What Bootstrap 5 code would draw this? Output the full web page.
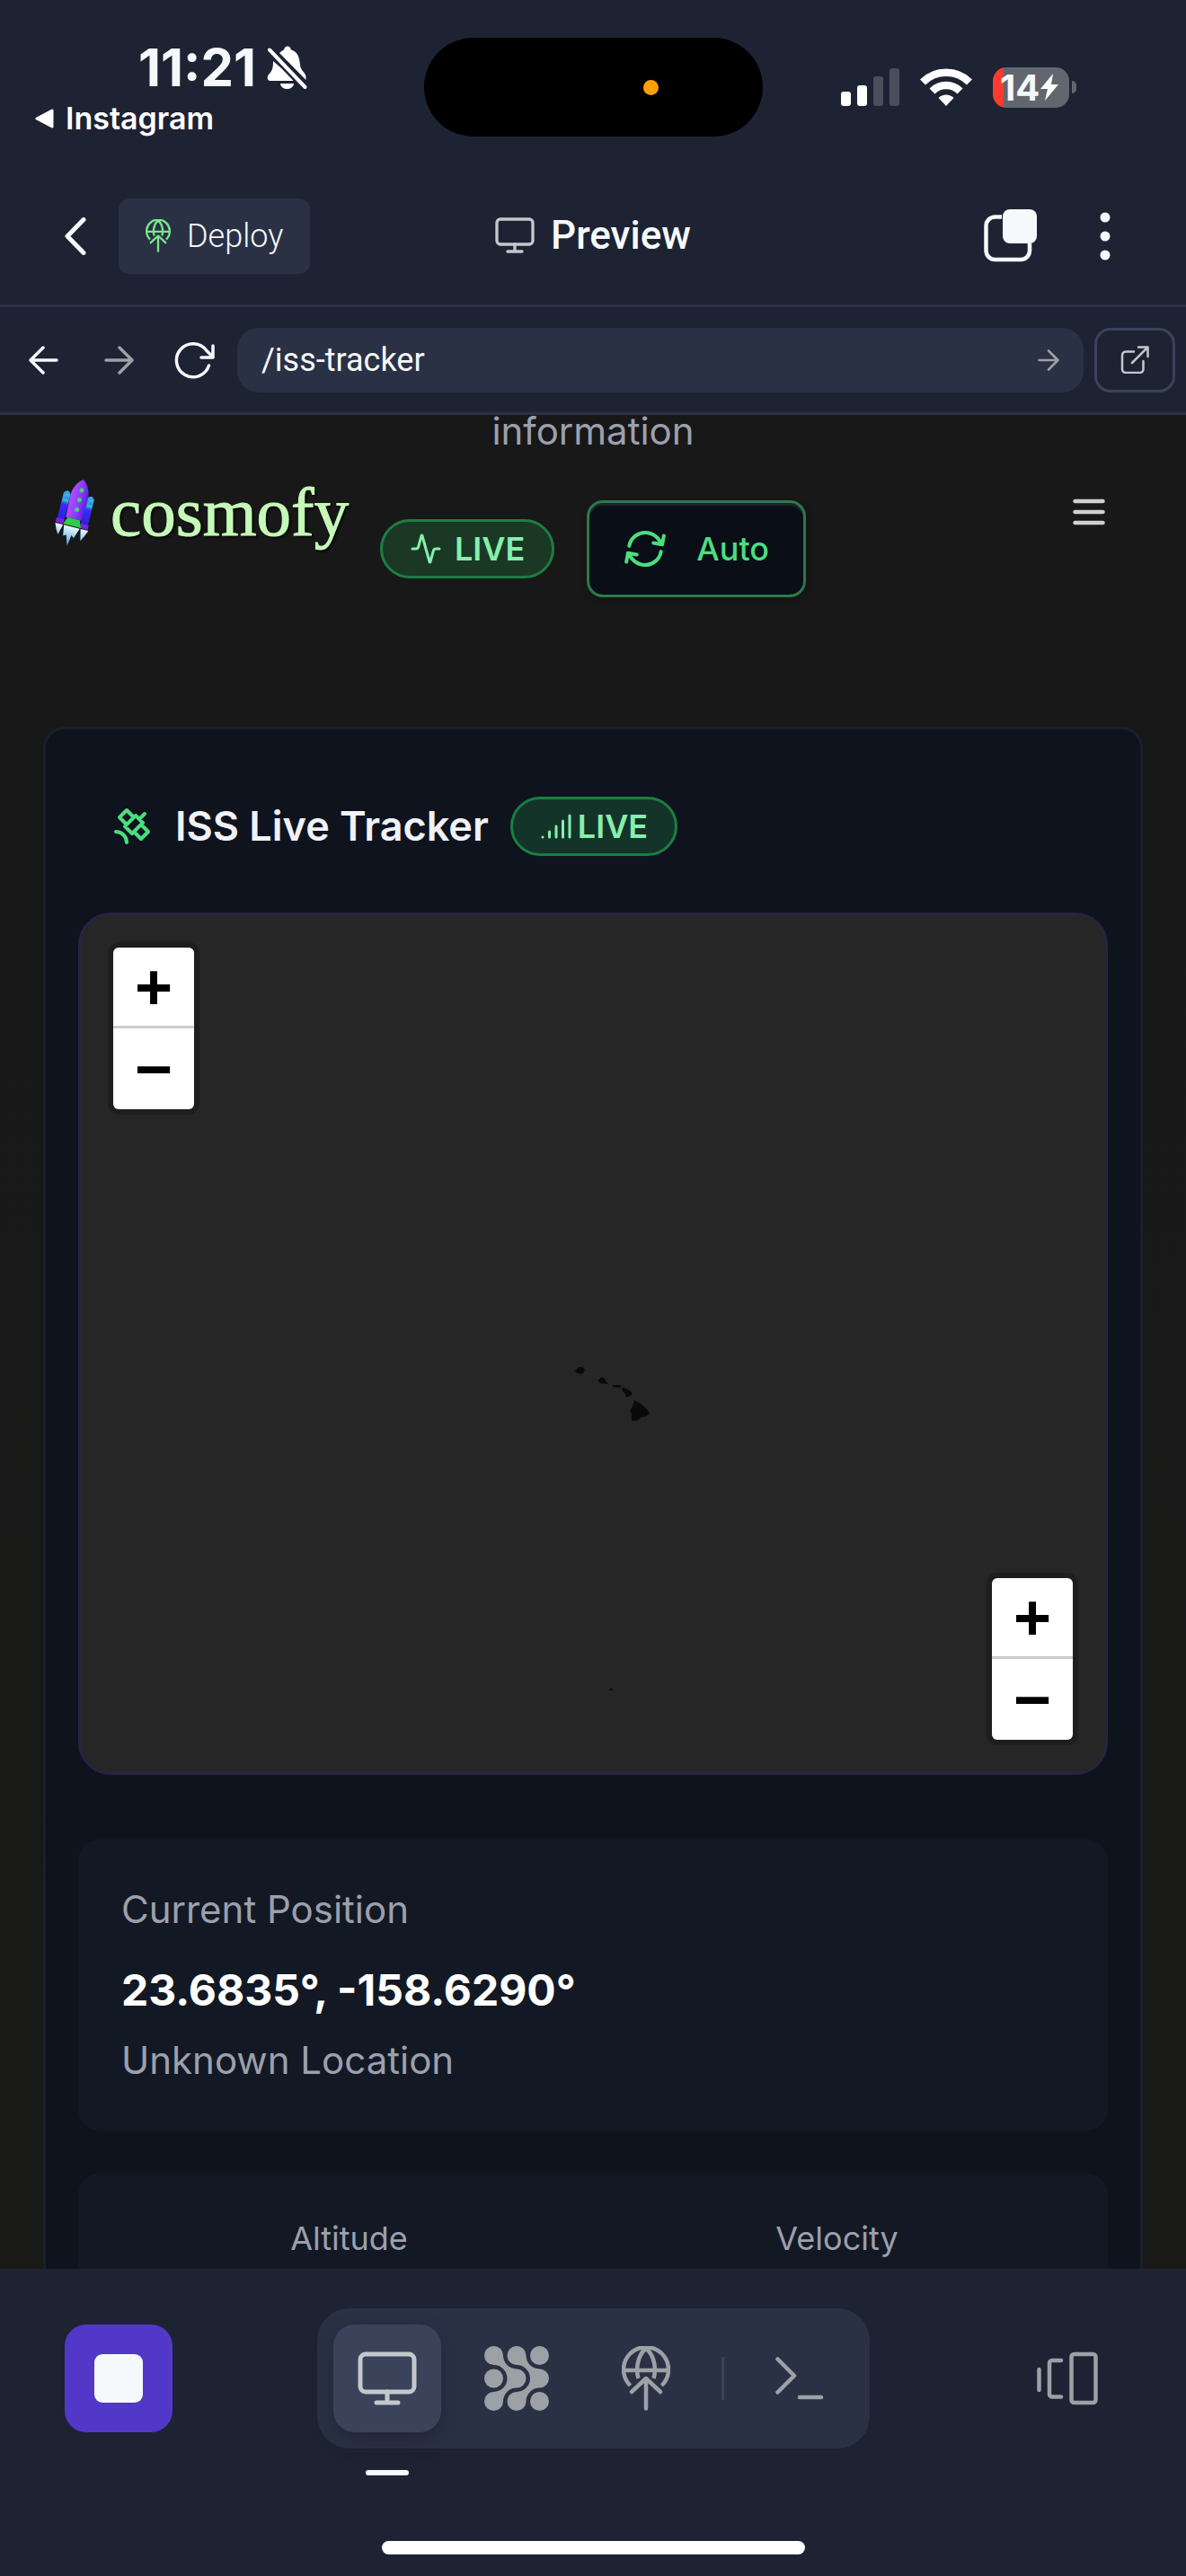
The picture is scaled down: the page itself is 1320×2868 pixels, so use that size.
<!DOCTYPE html>
<html lang="en">
<head>
<meta charset="utf-8">
<meta name="viewport" content="width=device-width, initial-scale=1">
<title>Preview – ISS Live Tracker</title>
<link href="https://cdn.jsdelivr.net/npm/bootstrap@5.3.0/dist/css/bootstrap.min.css" rel="stylesheet">
<style>
  :root { --shell: #1d2332; --raised: #2b3145; --edge: #3b435b; --ink: #f5f9fc; --dim: #9ca1a6; --muted: #9ca0ae; }
  body { background: var(--shell); color: var(--ink); font-family: Inter, "Liberation Sans", sans-serif; }
  svg { display: block; flex: none; }
  .plain { border: 0; background: none; padding: 0; color: inherit; display: flex; align-items: center; justify-content: center; flex: none; text-decoration: none; }
  .shell { height: 100vh; }
  .three { display: grid; grid-template-columns: 1fr auto 1fr; }
  .three > * { min-width: 0; }
  .quiet { color: var(--dim); }

  .status { padding-top: 42px; height: 186px; }
  .clock { font-size: 58px; line-height: 66px; font-weight: 700; padding-left: 154px; gap: 12px; }
  .back-app { font-size: 34px; line-height: 48px; font-weight: 600; padding-left: 39px; }
  .island { width: 377px; height: 110px; border-radius: 55px; background: #000; padding-right: 116px; }
  .mic-dot { width: 17px; height: 17px; border-radius: 50%; background: #ff9f0a; }
  .signals { height: 110px; padding-right: 122px; gap: 23px; }
  .battery { width: 85px; height: 45px; border-radius: 15px; background: linear-gradient(90deg, #ff3b30 12px, #62666f 12px); font-size: 40px; font-weight: 700; line-height: 45px; padding-left: 8px; }
  .nub { width: 5px; height: 14px; border-radius: 0 5px 5px 0; background: #62666f; margin-left: 3px; }

  .bar-top { font-family: Roboto, sans-serif; height: 156px; border-bottom: 3px solid var(--raised); }
  .back { width: 132px; height: 84px; padding-left: 36px; }
  .deploy { background: var(--raised); border-radius: 12px; height: 84px; padding: 0 30px; gap: 18px; font-size: 36px; font-weight: 300; }
  .heading { font-size: 44px; font-weight: 500; gap: 18px; margin: 0; }
  .corner { padding-right: 48px; gap: 21px; }
  .bar-url { height: 120px; border-bottom: 3px solid var(--raised); padding: 0 12px 0 6px; font-family: Roboto, sans-serif; }
  .square { width: 84px; height: 84px; }
  .address { background: var(--raised); border-radius: 24px; height: 72px; margin: 0 12px 0 6px; padding: 0 27px; }
  .address input { background: none; border: 0; color: var(--ink); font-size: 36px; outline: 0; min-width: 0; padding: 0; }
  .external { width: 90px; height: 72px; border: 3px solid var(--edge); border-radius: 18px; color: #c3c8cc; }

  .view { background: linear-gradient(#181818 20%, #191918); min-height: 0; }
  .site-nav { top: 0; left: 0; right: 0; padding: 60px 90px 0 60px; }
  .brand { font-family: "Liberation Serif", serif; font-size: 77px; line-height: 96px; color: #c5f9b8; gap: 15px; text-shadow: 2px 2px 3px #000; text-decoration: none; -webkit-text-stroke: 1px #c5f9b8; }
  .tagline { color: var(--muted); font-size: 42px; line-height: 36px; margin: 0 0 59px; text-align: center; }
  .actions { gap: 36px; margin-bottom: 144px; }
  .pill { height: 66px; border: 3px solid #1a7f42; border-radius: 33px; background: #1b3825; color: #86efac; font-size: 36px; font-weight: 600; padding: 0 30px; gap: 14px; }
  .pill-tight { background: #14342a; gap: 6px; }
  .auto { height: 108px; border: 3px solid #2b7a4b; border-radius: 18px; background: #0a0e17; color: #4ade80; font-size: 36px; font-weight: 500; padding: 0 38px; gap: 33px; box-shadow: inset 0 3px 0 #20232c, 0 3px 9px rgba(0,0,0,.2); }
  .tracker { margin: 0 48px; background: #0f131e; border: 3px solid #1a1f2c; border-radius: 24px; padding: 0 36px 48px; }
  .tracker-head { padding: 75px 36px 63px; gap: 24px; }
  .tracker-head h2 { font-size: 45px; line-height: 66px; font-weight: 600; color: #f0f2f6; margin: 0; }
  .map { height: 960px; background: #262626; border: 3px solid #262444; border-radius: 36px; overflow: hidden; margin-bottom: 72px; }
  .islands { inset: 0; }
  .zoomer { border: 6px solid #1e1e1e; border-radius: 12px; width: 102px; overflow: hidden; }
  .zoomer button { height: 90px; background: #fff; color: #000; font: 700 72px/84px "Liberation Sans", sans-serif; width: 100%; }
  .zoomer button:first-child { border-bottom: 3px solid #ccc; }
  .zoom-a { top: 30px; left: 30px; }
  .zoom-b { right: 30px; bottom: 30px; }
  .stat { background: #131924; border-radius: 24px; padding: 48px; margin-bottom: 48px; color: var(--muted); font-size: 42px; line-height: 60px; }
  .stat .coords { font-size: 48px; line-height: 72px; font-weight: 700; color: #fff; margin: 24px 0 12px; }
  .pair { font-size: 36px; line-height: 48px; text-align: center; display: grid; grid-template-columns: 1fr 1fr; column-gap: 36px; }

  .dock { padding: 44px 72px 0; background: var(--shell); color: var(--dim); }
  .tool { width: 120px; height: 120px; border-radius: 24px; }
  .stop { background: #5138c9; }
  .stop span { width: 54px; height: 54px; border-radius: 9px; background: var(--ink); }
  .tools { background: var(--raised); border-radius: 36px; padding: 18px; gap: 24px; }
  .tools .active { background: var(--edge); color: #c3c8cc; box-shadow: 0 9px 24px rgba(0,0,0,.22); }
  .tools .active::after { content: ""; position: absolute; left: 36px; right: 36px; top: 162px; height: 6px; border-radius: 3px; background: var(--ink); }
  .rule { width: 3px; height: 48px; background: var(--edge); }
  .home { width: 471px; height: 15px; border-radius: 8px; background: #fff; margin: 103px auto 24px; }
</style>
<script src="https://cdn.jsdelivr.net/npm/bootstrap@5.3.0/dist/js/bootstrap.bundle.min.js"></script>
</head>
<body>
<svg width="0" height="0" class="position-absolute" aria-hidden="true">
  <symbol id="globe-up" viewBox="0 0 54 72"><g fill="none" stroke="currentColor" stroke-width="4.500"><path d="M9.500 44A25 25 0 1 1 44.500 44M2.500 27h49M27 2.500C16 12 16 28 18.500 36M27 2.500C38 12 38 28 35.500 36"/><path d="M11 51 27 36 43 51M27 37V69.500" stroke-linecap="round" stroke-linejoin="round"/></g></symbol>
  <symbol id="monitor" viewBox="0 0 66 60"><g fill="none" stroke="currentColor" stroke-width="5" stroke-linecap="round"><rect x="3" y="3" width="60" height="42" rx="6"/><path d="M33 45V57M21 57H45"/></g></symbol>
</svg>
<div class="shell d-flex flex-column overflow-hidden">

  <div class="status three flex-shrink-0">
    <div>
      <div class="clock d-flex align-items-center">11:21
        <svg width="45" height="49" viewBox="0 0 45 49" fill="#fff"><path d="M14 8C16 6 17.500 5 19 4.500 20 -1 26 -1 27 4.500 35 7 36 13 37 21 37.500 28 43.500 30 43.500 34.500V38ZM7 17 33 39H4C0 39 0 34 2 32 6 28 7 25 7 17ZM15 42H30C29 50 16 50 15 42Z"/><path d="M3 4.500 42.500 46" stroke="#1d2332" stroke-width="9"/><path d="M3 4.500 42.500 46" stroke="#fff" stroke-width="4" stroke-linecap="round"/></svg>
      </div>
      <a href="#" class="back-app d-flex align-items-center text-white text-decoration-none">
        <svg class="me-2" width="26" height="24" viewBox="0 0 26 24"><path d="M2 12 19 3V21Z" fill="#fff" stroke="#fff" stroke-width="3" stroke-linejoin="round"/></svg>Instagram</a>
    </div>
    <div class="island d-flex align-items-center justify-content-end"><span class="mic-dot"></span></div>
    <div class="signals d-flex align-items-center justify-content-end">
      <svg width="65" height="42" viewBox="0 0 65 42" fill="#fff"><rect y="26" width="11" height="16" rx="3"/><rect x="18" y="19" width="11" height="23" rx="3"/><g fill="#494e5b"><rect x="36" y="9" width="11" height="33" rx="3"/><rect x="54" width="11" height="42" rx="3"/></g></svg>
      <svg width="58" height="42" viewBox="0 0 58 42"><g fill="none" stroke="#fff" stroke-width="8.500"><path d="M3 15.500A37 37 0 0 1 55 15.500"/><path d="M13.500 25.500A22 22 0 0 1 44.500 25.500"/></g><path d="M29 42 20.500 33A12 12 0 0 1 37.500 33Z" fill="#fff"/></svg>
      <div class="d-flex align-items-center">
        <div class="battery d-flex align-items-center">14<svg width="22" height="30" viewBox="0 0 22 30" fill="#fff"><path d="M15 0 1 17H9L6 30 21 12H13Z"/></svg></div>
        <span class="nub"></span>
      </div>
    </div>
  </div>

  <header class="bar-top three align-items-center flex-shrink-0">
    <div class="d-flex align-items-center">
      <button class="plain back" aria-label="Back"><svg width="24" height="42" viewBox="0 0 24 42"><path d="M21 2.500 3 21 21 39.500" fill="none" stroke="currentColor" stroke-width="5" stroke-linecap="round" stroke-linejoin="round"/></svg></button>
      <button class="plain deploy"><svg width="28" height="37" color="#76e88a"><use href="#globe-up"/></svg>Deploy</button>
    </div>
    <h1 class="heading d-flex align-items-center"><svg width="44" height="40" color="#c3c8cc"><use href="#monitor"/></svg>Preview</h1>
    <div class="corner d-flex align-items-center justify-content-end">
      <button class="plain square" aria-label="Copy"><svg width="60" height="60" viewBox="0 0 60 60"><path d="M20 8.500H12.500A10 10 0 0 0 2.500 18.500V46A10 10 0 0 0 12.500 56H41A10 10 0 0 0 51 46V38" fill="none" stroke="currentColor" stroke-width="4.500"/><rect x="21" y="0" width="38" height="38" rx="8" fill="currentColor"/></svg></button>
      <button class="plain square" aria-label="More"><svg width="12" height="54" viewBox="0 0 12 54" fill="currentColor"><circle cx="6" cy="6" r="5.500"/><circle cx="6" cy="27" r="5.500"/><circle cx="6" cy="48" r="5.500"/></svg></button>
    </div>
  </header>

  <nav class="bar-url d-flex align-items-center flex-shrink-0" aria-label="Browser">
    <button class="plain square" aria-label="Previous page"><svg width="33" height="32" viewBox="0 0 33 32" fill="none" stroke="currentColor" stroke-width="3.500" stroke-linecap="round" stroke-linejoin="round"><path d="M31 16H2M16 2 2 16 16 30"/></svg></button>
    <button class="plain square quiet" aria-label="Next page"><svg width="33" height="32" viewBox="0 0 33 32" fill="none" stroke="currentColor" stroke-width="3.500" stroke-linecap="round" stroke-linejoin="round"><path d="M2 16H31M17 2 31 16 17 30"/></svg></button>
    <button class="plain square" aria-label="Reload"><svg width="45" height="42" viewBox="0 0 45 42" fill="none" stroke="currentColor" stroke-width="3.500" stroke-linecap="round" stroke-linejoin="round"><path d="M38.500 27A18.500 18.500 0 1 1 36 10.500L43 17.500M43 5V18H30"/></svg></button>
    <form class="address d-flex align-items-center flex-grow-1" onsubmit="return false">
      <input class="flex-grow-1" type="text" value="/iss-tracker" aria-label="Address">
      <button class="plain quiet" aria-label="Go"><svg width="24" height="24" viewBox="0 0 24 24" fill="none" stroke="currentColor" stroke-width="2.500" stroke-linecap="round" stroke-linejoin="round"><path d="M1.500 12H22.500M12 1.500 22.500 12 12 22.500"/></svg></button>
    </form>
    <a href="#" class="plain external" aria-label="Open in new tab"><svg width="32" height="31" viewBox="0 0 32 31" fill="none" stroke="currentColor" stroke-width="2.500" stroke-linecap="round" stroke-linejoin="round"><path d="M15 6.500H6A4 4 0 0 0 2 10.500V26A4 4 0 0 0 6 30H21.500A4 4 0 0 0 25.500 26V17M13 19 30 2M20 1.500H30.500V12"/></svg></a>
  </nav>

  <main class="view position-relative flex-grow-1 overflow-hidden">
    <p class="tagline">information</p>
    <div class="actions d-flex align-items-center justify-content-center">
      <span class="pill d-flex align-items-center"><svg width="36" height="36" viewBox="0 0 24 24" fill="none" stroke="currentColor" stroke-width="2" stroke-linecap="round" stroke-linejoin="round"><path d="M22 12h-2.480a2 2 0 0 0-1.930 1.460l-2.350 8.360a.25.25 0 0 1-.48 0L9.240 2.180a.25.25 0 0 0-.48 0l-2.350 8.360A2 2 0 0 1 4.490 12H2"/></svg>LIVE</span>
      <button class="plain auto"><svg width="48" height="48" viewBox="0 0 24 24" fill="none" stroke="currentColor" stroke-width="2" stroke-linecap="round" stroke-linejoin="round"><g transform="rotate(10 12 12)"><path d="M3 12a9 9 0 0 1 9-9 9.750 9.750 0 0 1 6.740 2.740L21 8M21 3v5h-5M21 12a9 9 0 0 1-9 9 9.750 9.750 0 0 1-6.740-2.740L3 16M8 16H3v5"/></g></svg>Auto</button>
    </div>

    <section class="tracker">
      <div class="tracker-head d-flex align-items-center">
        <svg width="48" height="48" viewBox="0 0 24 24" fill="none" stroke="#4ade80" stroke-width="2" stroke-linecap="round" stroke-linejoin="round"><path d="M13 7 9 3 5 7l4 4M17 11l4 4-4 4-4-4M8 12l4 4 6-6-4-4ZM16 8l3-3M9 21a6 6 0 0 0-6-6"/></svg>
        <h2>ISS Live Tracker</h2>
        <span class="pill pill-tight d-flex align-items-center"><svg width="36" height="36" viewBox="0 0 24 24" fill="none" stroke="currentColor" stroke-width="2" stroke-linecap="round"><path d="M2 20h.01M7 20v-4M12 20v-8M17 20V8M22 4v16"/></svg>LIVE</span>
      </div>

      <div class="map position-relative">
        <svg class="islands position-absolute" width="100%" height="100%" viewBox="-570 -477 1140 954" fill="#0a0a0a" aria-label="Hawaii">
          <!-- Kauai, Oahu, Molokai, Maui, Hawaii -->
          <path d="M-20 30l4-4h4l3 3-2 4-3 1-5-2ZM6 40l4-3 3 2 2 4h2l-1 2-8-1-2-3ZM22 46l8 0 2 2-4 1-6-1ZM32 49l3 0 4 2 3 2 2 3-4 3h-4v-3l-3-3ZM46 63l6 3 5 4 6 7-4 4-5 1-6 4-5 0 0-7-2-5 3-4Z"/>
          <circle cx="20" cy="385" r="1.500"/>
        </svg>
        <div class="zoomer zoom-a position-absolute"><button class="plain" aria-label="Zoom in">+</button><button class="plain" aria-label="Zoom out">−</button></div>
        <div class="zoomer zoom-b position-absolute"><button class="plain" aria-label="Zoom in">+</button><button class="plain" aria-label="Zoom out">−</button></div>
      </div>

      <div class="stat">
        <div>Current Position</div>
        <div class="coords">23.6835°, -158.6290°</div>
        <div>Unknown Location</div>
      </div>
      <div class="stat pair"><div>Altitude</div><div>Velocity</div></div>
    </section>

    <div class="site-nav position-absolute d-flex align-items-center justify-content-between">
      <a href="#" class="brand d-flex align-items-center">
        <svg width="48" height="80" viewBox="0 0 48 80">
          <defs><linearGradient id="hull"><stop stop-color="#b44dff"/><stop offset=".55" stop-color="#8a3dfb"/><stop offset="1" stop-color="#5a1fe0"/></linearGradient><linearGradient id="pod" x2="0" y2="1"><stop stop-color="#3da5f4"/><stop offset=".35" stop-color="#2b8fe0"/><stop offset=".45" stop-color="#3a2bff"/><stop offset="1" stop-color="#2a1fd0"/></linearGradient><linearGradient id="jet" x2="0" y2="1"><stop stop-color="#e8fbff"/><stop offset="1" stop-color="#3f9fe0"/></linearGradient></defs>
          <g transform="rotate(14 24 40)">
            <path d="M6 22q4-6 8 0V54H6ZM33 22q4-6 8 0V54H33Z" fill="url(#pod)"/>
            <path d="M5 51h9v5H5ZM33 51h9v5H33Z" fill="#7a22dd"/>
            <path d="M24 3C31 8 34 16 34 24L33 48H15L14 24C14 16 17 8 24 3Z" fill="url(#hull)"/>
            <path d="M17 48H31L34 56H14Z" fill="#2fce4d"/>
            <g fill="#45d36b"><circle cx="25" cy="15" r="2.500"/><circle cx="25" cy="26" r="2.500"/><circle cx="25" cy="37" r="2.500"/></g>
            <path d="M8 24h5M7 30h6M35 24h5M35 30h5" stroke="#36c7a8" stroke-width="2"/>
            <path d="M5 57H14L11 69 8 64ZM15 57H33L29 69 26 66 24 79 20 67 17 69ZM34 57H43L40 64 37 70Z" fill="url(#jet)"/>
          </g>
        </svg>cosmofy</a>
      <button class="plain" aria-label="Menu"><svg width="36" height="30" viewBox="0 0 36 30" stroke="#d0d0d0" stroke-width="4.500" stroke-linecap="round"><path d="M2.500 3H33.500M2.500 15H33.500M2.500 27H33.500"/></svg></button>
    </div>
  </main>

  <footer class="dock flex-shrink-0">
    <div class="d-flex align-items-center justify-content-between">
      <button class="plain tool stop" aria-label="Stop"><span></span></button>
      <div class="tools d-flex align-items-center">
        <button class="plain tool active position-relative" aria-label="Preview"><svg width="66" height="60"><use href="#monitor"/></svg></button>
        <button class="plain tool" aria-label="Agent"><svg width="72" height="72" viewBox="0 0 72 72" fill="currentColor"><defs><path id="flow" d="M10.500 21A15 15 0 0 1 10.500 51A10.500 10.500 0 1 0 21 61.500A15 15 0 0 1 36 46.500A10.500 10.500 0 0 0 36 25.500A15 15 0 0 1 21 10.500A10.500 10.500 0 1 0 10.500 21Z"/></defs><use href="#flow"/><use href="#flow" x="25.500"/><circle cx="10.500" cy="36" r="10.500"/><circle cx="61.500" cy="10.500" r="10.500"/><circle cx="61.500" cy="61.500" r="10.500"/></svg></button>
        <button class="plain tool" aria-label="Deployments"><svg width="54" height="72"><use href="#globe-up"/></svg></button>
        <span class="rule"></span>
        <button class="plain tool" aria-label="Shell"><svg width="54" height="48" viewBox="0 0 54 48" fill="none" stroke="currentColor" stroke-width="4.500" stroke-linecap="round" stroke-linejoin="round"><path d="M2.500 2.500 21 21 2.500 39.500M27 45H51"/></svg></button>
      </div>
      <button class="plain tool" aria-label="Switch tabs"><svg width="68" height="60" viewBox="0 0 68 60" fill="none" stroke="currentColor" stroke-width="4.500" stroke-linecap="round" stroke-linejoin="round"><rect x="38.500" y="3" width="27" height="54" rx="3"/><path d="M27 10H17A3 3 0 0 0 14 13V47.500A3 3 0 0 0 17 50.500H27M2.500 20V43"/></svg></button>
    </div>
    <div class="home"></div>
  </footer>
</div>
</body>
</html>
